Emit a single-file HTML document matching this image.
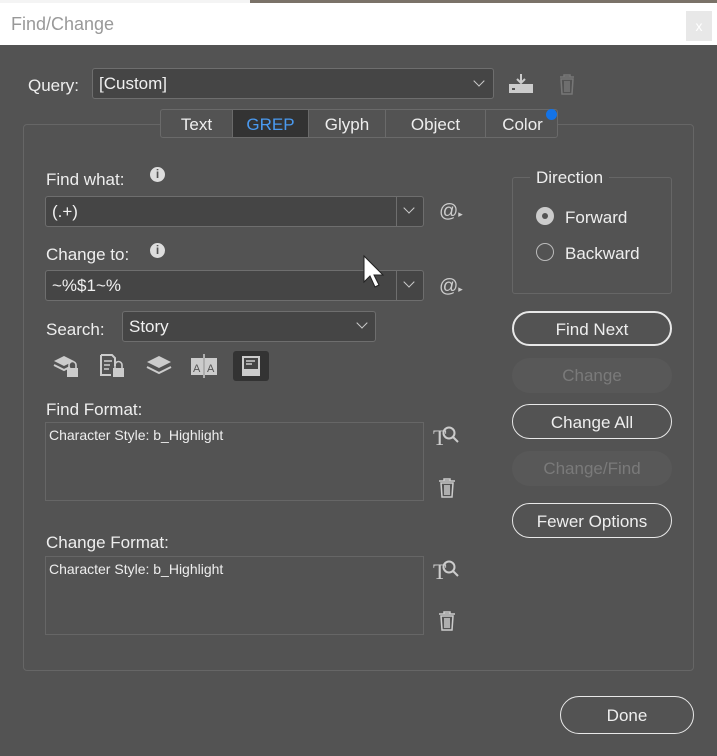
<!DOCTYPE html><html><head><style>
*{box-sizing:border-box;margin:0;padding:0}
body{width:717px;height:756px;background:#535353;font-family:"Liberation Sans",sans-serif;color:#eee;position:relative;overflow:hidden;font-size:17px}
.a{position:absolute}
.field{position:absolute;background:#454545;border:1px solid #6e6e6e;border-radius:3px;color:#f0f0f0;padding-left:6px;line-height:30px}
.chev{position:absolute;width:8px;height:8px;border-right:1.3px solid #ccc;border-bottom:1.3px solid #ccc;transform:rotate(45deg)}
.btn{position:absolute;left:512px;width:160px;height:35px;border:1.3px solid #e8e8e8;border-radius:18px;text-align:center;line-height:35px;font-size:17px}
.dis{border:none;background:#585858;color:#7a7a7a}
.box{position:absolute;border:1px solid #666;background:#535353;font-size:14px;padding:4px 3px;color:#eee}
.tab{position:absolute;top:0;height:28px;line-height:30px;text-align:center;border-right:1px solid #6a6a6a}
</style></head><body>
<div class="a" style="left:0;top:0;width:717px;height:3px;background:#f4f4f4"></div>
<div class="a" style="left:250px;top:0;width:467px;height:3px;background:#7a7268"></div>
<div class="a" style="left:0;top:3px;width:717px;height:42px;background:#fff"></div>
<div class="a" style="left:11px;top:14px;font-size:18px;color:#999">Find/Change</div>
<div class="a" style="left:686px;top:11px;width:26px;height:30px;background:#e8e8e8;color:#fff;text-align:center;line-height:30px;font-size:14px">x</div>

<div class="a" style="left:28px;top:76px">Query:</div>
<div class="field" style="left:92px;top:68px;width:402px;height:31px">[Custom]</div>
<div class="chev" style="left:475px;top:77px"></div>
<svg class="a" style="left:508px;top:73px" width="26" height="22"><path d="M13 1v9M9 6l4 4 4-4" stroke="#ccc" stroke-width="2" fill="none"/><rect x="1" y="11" width="24" height="9" fill="#ccc"/><rect x="4" y="15" width="3" height="2" fill="#535353"/></svg>
<svg class="a" style="left:558px;top:73px" width="18" height="22"><path d="M2 4h14M6 4V2h6v2M3 6h12l-1 15H4z M7 8v11M9 8v11M11 8v11" stroke="#777" stroke-width="1.5" fill="none"/></svg>

<div class="a" style="left:23px;top:124px;width:671px;height:547px;border:1px solid #666;border-radius:4px"></div>
<div class="a" style="left:160px;top:109px;width:398px;height:29px;border:1px solid #6a6a6a;border-radius:3px;background:#535353;overflow:hidden">
<div class="tab" style="left:0;width:72px">Text</div>
<div class="tab" style="left:72px;width:76px;background:#333;color:#4a9af0">GREP</div>
<div class="tab" style="left:148px;width:77px">Glyph</div>
<div class="tab" style="left:225px;width:100px">Object</div>
<div class="tab" style="left:325px;width:73px;border:none">Color</div>
</div>
<div class="a" style="left:546px;top:109px;width:11px;height:11px;border-radius:50%;background:#1473e6"></div>

<div class="a" style="left:46px;top:170px">Find what:</div>
<div class="a" style="left:150px;top:167px;width:15px;height:15px;border-radius:50%;background:#ddd;color:#535353;font-size:12px;text-align:center;line-height:15px;font-weight:bold">i</div>
<div class="field" style="left:45px;top:196px;width:379px;height:31px">(.+)</div>
<div class="a" style="left:396px;top:197px;width:1px;height:29px;background:#6e6e6e"></div>
<div class="chev" style="left:405px;top:204px"></div>
<div class="a" style="left:439px;top:201px;color:#ccc;font-size:19px">@<span style="font-size:9px">▸</span></div>

<div class="a" style="left:46px;top:245px">Change to:</div>
<div class="a" style="left:150px;top:243px;width:15px;height:15px;border-radius:50%;background:#ddd;color:#535353;font-size:12px;text-align:center;line-height:15px;font-weight:bold">i</div>
<div class="field" style="left:45px;top:270px;width:379px;height:31px">~%$1~%</div>
<div class="a" style="left:396px;top:271px;width:1px;height:29px;background:#6e6e6e"></div>
<div class="chev" style="left:405px;top:278px"></div>
<div class="a" style="left:439px;top:276px;color:#ccc;font-size:19px">@<span style="font-size:9px">▸</span></div>
<svg class="a" style="left:362px;top:254px" width="26" height="36"><path d="M2 2v26l6-6 5 11 4-2-5-10h9z" fill="#fff" stroke="#222" stroke-width="1"/></svg>

<div class="a" style="left:46px;top:320px">Search:</div>
<div class="field" style="left:122px;top:311px;width:254px;height:31px">Story</div>
<div class="chev" style="left:358px;top:319px"></div>

<svg class="a" style="left:52px;top:353px" width="28" height="26"><path d="M2 8l10-5 10 5-10 5z" fill="#ccc"/><path d="M2 12l10 5 6-3" stroke="#ccc" stroke-width="2" fill="none"/><rect x="15" y="15" width="11" height="9" fill="#ccc"/><path d="M17 15v-3a3.5 3.5 0 0 1 7 0v3" stroke="#ccc" stroke-width="1.6" fill="none"/></svg>
<svg class="a" style="left:99px;top:353px" width="28" height="26"><path d="M2 2h11l3 3v8M2 2v20h10" stroke="#ccc" stroke-width="2" fill="none"/><path d="M5 8h8M5 12h6M5 16h5" stroke="#ccc" stroke-width="1.5"/><rect x="14" y="15" width="11" height="9" fill="#ccc"/><path d="M16 15v-3a3.5 3.5 0 0 1 7 0v3" stroke="#ccc" stroke-width="1.6" fill="none"/></svg>
<svg class="a" style="left:146px;top:355px" width="26" height="22"><path d="M1 7l12-6 12 6-12 6z" fill="#ccc"/><path d="M1 12l12 6 12-6" stroke="#ccc" stroke-width="2" fill="none"/></svg>
<svg class="a" style="left:190px;top:353px" width="28" height="26"><rect x="1" y="5" width="12" height="17" fill="#ccc"/><rect x="15" y="5" width="12" height="17" fill="#ccc"/><line x1="14" y1="1" x2="14" y2="25" stroke="#ccc" stroke-width="1.5"/><text x="3" y="19" font-size="11" fill="#535353" font-family="Liberation Sans">A</text><text x="17" y="19" font-size="11" fill="#535353" font-family="Liberation Sans">A</text></svg>
<div class="a" style="left:233px;top:351px;width:36px;height:30px;background:#333;border-radius:3px"></div>
<svg class="a" style="left:240px;top:355px" width="22" height="22"><rect x="2" y="1" width="18" height="20" fill="#ccc"/><rect x="4" y="3" width="14" height="11" fill="#444"/><path d="M6 6h9M6 9h6" stroke="#ccc" stroke-width="1.5"/></svg>

<div class="a" style="left:46px;top:400px">Find Format:</div>
<div class="box" style="left:45px;top:422px;width:379px;height:79px">Character Style: b_Highlight</div>
<div class="a" style="left:433px;top:425px;font-family:'Liberation Serif',serif;font-size:22px;color:#ccc">T</div>
<svg class="a" style="left:440px;top:425px" width="20" height="20"><circle cx="9" cy="8" r="5.5" stroke="#ccc" stroke-width="2" fill="none"/><path d="M13 12l5 5" stroke="#ccc" stroke-width="2"/></svg>
<svg class="a" style="left:438px;top:478px" width="18" height="20"><path d="M1 3h16M6 3V1h6v2M3 5h12l-1 14H4zM7 7v10M9 7v10M11 7v10" stroke="#ccc" stroke-width="1.5" fill="none"/></svg>

<div class="a" style="left:46px;top:533px">Change Format:</div>
<div class="box" style="left:45px;top:556px;width:379px;height:79px">Character Style: b_Highlight</div>
<div class="a" style="left:433px;top:559px;font-family:'Liberation Serif',serif;font-size:22px;color:#ccc">T</div>
<svg class="a" style="left:440px;top:559px" width="20" height="20"><circle cx="9" cy="8" r="5.5" stroke="#ccc" stroke-width="2" fill="none"/><path d="M13 12l5 5" stroke="#ccc" stroke-width="2"/></svg>
<svg class="a" style="left:438px;top:611px" width="18" height="20"><path d="M1 3h16M6 3V1h6v2M3 5h12l-1 14H4zM7 7v10M9 7v10M11 7v10" stroke="#ccc" stroke-width="1.5" fill="none"/></svg>

<div class="a" style="left:512px;top:177px;width:160px;height:117px;border:1px solid #666;border-radius:3px"></div>
<div class="a" style="left:530px;top:168px;background:#535353;padding:0 6px">Direction</div>
<div class="a" style="left:536px;top:207px;width:18px;height:18px;border-radius:50%;background:#ccc"></div>
<div class="a" style="left:542px;top:213px;width:6px;height:6px;border-radius:50%;background:#535353"></div>
<div class="a" style="left:565px;top:208px">Forward</div>
<div class="a" style="left:536px;top:243px;width:18px;height:18px;border-radius:50%;border:1px solid #bbb"></div>
<div class="a" style="left:565px;top:244px">Backward</div>

<div class="btn" style="top:311px;border-width:2px;line-height:33px">Find Next</div>
<div class="btn dis" style="top:358px">Change</div>
<div class="btn" style="top:404px">Change All</div>
<div class="btn dis" style="top:451px">Change/Find</div>
<div class="btn" style="top:503px">Fewer Options</div>
<div class="btn" style="left:560px;top:696px;width:134px;height:38px;line-height:38px;border-radius:19px">Done</div>
</body></html>
